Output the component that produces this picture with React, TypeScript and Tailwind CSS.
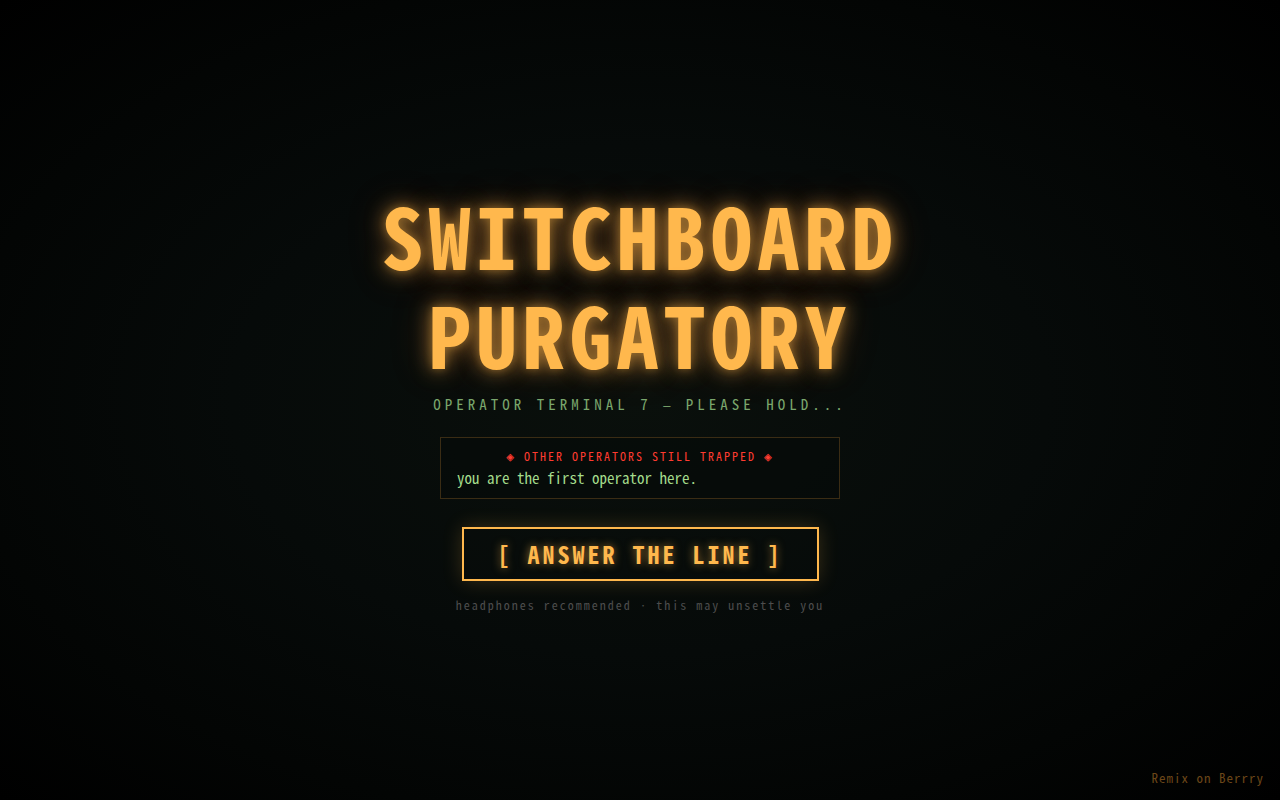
import { useState } from 'react';

const operators: string[] = [];

function Diamond() {
  return <span className="font-['DejaVu_Sans_Mono',monospace] text-[13px] leading-none">◈</span>;
}

export default function App() {
  const [answered, setAnswered] = useState(false);

  return (
    <div className="relative min-h-screen flex flex-col items-center justify-center overflow-hidden bg-[radial-gradient(ellipse_at_center,#0a100c_0%,#060a09_45%,#030504_75%,#000000_100%)] font-['Noto_Sans_Mono_CJK_JP','Liberation_Mono',monospace] text-[#ffb84d]">
      <main className="flex flex-col items-center w-full max-w-3xl px-6 pb-1 text-center">
        <h1 className="text-[84px] leading-[99px] font-bold tracking-[5px] uppercase [text-shadow:0_0_8px_rgba(255,184,77,0.3),0_0_20px_rgba(255,184,77,0.6),0_0_40px_rgba(255,100,40,0.25)]">
          Switchboard
          <br />
          Purgatory
        </h1>

        <p className="mt-3 text-[15px] leading-5 tracking-[4px] uppercase text-[#7aa66c]">
          Operator Terminal 7 <span className="font-['Liberation_Mono',monospace] text-xs">—</span> Please Hold...
        </p>

        {/* Other operators */}
        <section className="mt-[22px] w-full max-w-[400px] border border-[#3a2c14] bg-[#050a08]/60 px-4 pt-2 pb-2.5">
          <h2 className="h-5 text-xs leading-5 tracking-[2px] uppercase text-[#ff3b30]">
            <Diamond /> Other operators still trapped <Diamond />
          </h2>
          <p className="mt-0.5 text-[15px] leading-5 text-left text-[#a4dc8c]">
            {operators.length ? operators.join(', ') : 'you are the first operator here.'}
          </p>
        </section>

        <button
          type="button"
          aria-pressed={answered}
          onClick={() => setAnswered(!answered)}
          className="mt-7 border-2 border-[#ffb84d] px-[34px] py-2 text-2xl leading-[34px] font-bold tracking-[3px] uppercase cursor-pointer shadow-[0_0_20px_rgba(255,184,77,0.2)] [text-shadow:0_0_8px_rgba(255,184,77,0.6)]"
        >
          [ Answer the line ]
        </button>

        <p className="mt-4 text-xs leading-4 tracking-[2px] text-[#4d4d4d]">
          headphones recommended · this may unsettle you
        </p>
      </main>

      <a
        href="#remix"
        className="absolute bottom-3.5 right-4 text-[13px] leading-4 tracking-[1px] text-[#6b4618]"
      >
        Remix on Berrry
      </a>
    </div>
  );
}
